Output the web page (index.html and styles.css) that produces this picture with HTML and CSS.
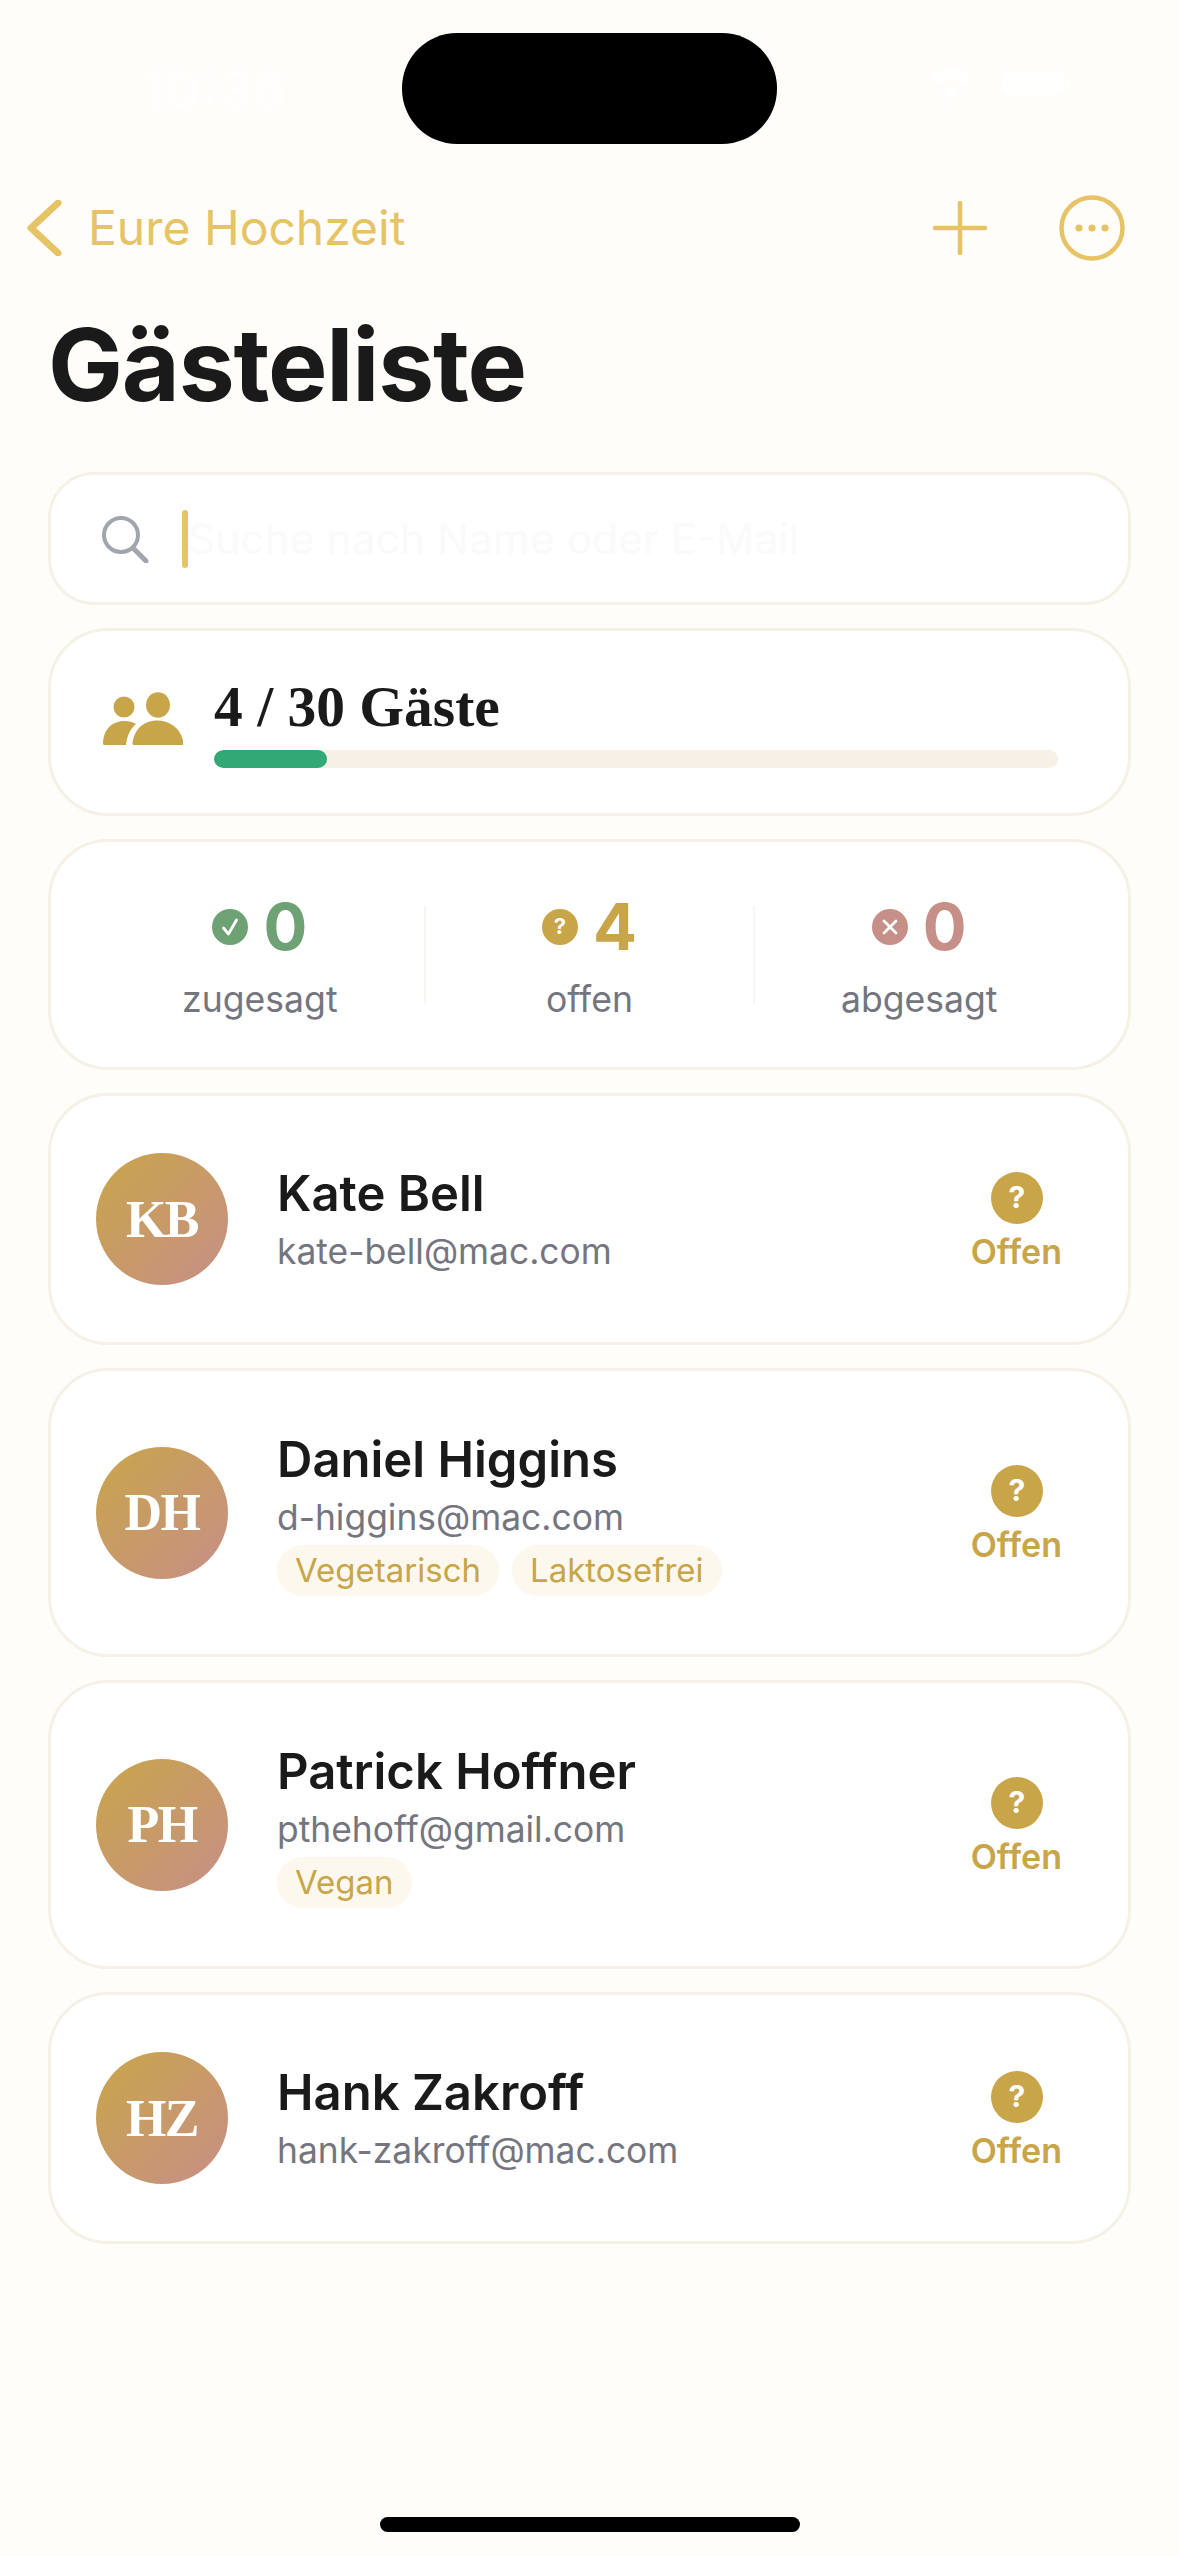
FILE: index.html
```html
<!DOCTYPE html>
<html lang="de">
<head>
<meta charset="utf-8">
<title>Gästeliste</title>
<link rel="stylesheet" href="styles.css">
</head>
<body>
<div class="island"></div>
<div class="screen">
  <div class="status">
    <span>10:36</span>
    <div class="status-icons">
      <svg class="wifi" viewBox="0 0 46 34"><path d="M23 34 15 24a12 12 0 0 1 16 0ZM9 18 3 11a30 30 0 0 1 40 0l-6 7a21 21 0 0 0-28 0Z" fill="#fffffe"/></svg>
      <svg class="battery" viewBox="0 0 68 24"><rect width="62" height="24" rx="7" fill="#fffffe"/><rect x="64" y="7" width="4" height="10" rx="2" fill="#fffffe"/></svg>
    </div>
  </div>
  <nav class="nav">
    <div class="back">
      <svg class="chev" viewBox="0 0 36 56"><path d="M32 3 5 28l27 25" fill="none" stroke="#e6c365" stroke-width="7" stroke-linecap="round" stroke-linejoin="round"/></svg>
      <span>Eure Hochzeit</span>
    </div>
    <div class="nav-actions">
      <svg class="plus" viewBox="0 0 54 54"><path d="M27 2v50M2 27h50" fill="none" stroke="#e6c365" stroke-width="4.5" stroke-linecap="round"/></svg>
      <svg class="more" viewBox="0 0 66 66"><circle cx="33" cy="33" r="30.5" fill="none" stroke="#e6c365" stroke-width="4.5"/><circle cx="20" cy="33" r="3.6" fill="#e6c365"/><circle cx="33" cy="33" r="3.6" fill="#e6c365"/><circle cx="46" cy="33" r="3.6" fill="#e6c365"/></svg>
    </div>
  </nav>
  <h1 class="title">Gästeliste</h1>

  <div class="card search">
    <svg class="lens" viewBox="0 0 48 48"><circle cx="20" cy="20" r="17" fill="none" stroke="#a3a5ae" stroke-width="4"/><path d="m32 33 13 13" stroke="#a3a5ae" stroke-width="5" stroke-linecap="round"/></svg>
    <i class="caret"></i>
    <span class="placeholder">Suche nach Name oder E-Mail</span>
  </div>

  <div class="card capacity">
    <svg class="people" viewBox="0 0 80 54"><circle cx="21" cy="15" r="10.500" fill="#c9a549"/><ellipse cx="55" cy="13" rx="12" ry="12.800" fill="#c9a549"/><path d="M0 52c0-14 9-23 21-23 5 0 9 1 12 3-6 5-9 12-10 21H1.500A1.500 1.500 0 0 1 0 52Z" fill="#c9a549"/><path d="M31 53c-.8 0-1.500-.6-1.500-1.500C31 37 41 28.500 54 28.500S79 37 80.500 51.500c0 .9-.7 1.500-1.500 1.500Z" fill="#c9a549"/></svg>
    <div class="capacity-body">
      <div class="capacity-label">4 / 30 Gäste</div>
      <div class="track"><div class="fill"></div></div>
    </div>
  </div>

  <div class="card stats">
    <div class="stat">
      <div class="stat-top green">
        <svg class="stat-ico" viewBox="0 0 36 36"><circle cx="18" cy="18" r="18" fill="#6ea274"/><path d="m11.500 19 5 6 8-14" fill="none" stroke="#fff" stroke-width="2.800" stroke-linecap="round" stroke-linejoin="round"/></svg>
        <span class="num">0</span>
      </div>
      <div class="stat-label">zugesagt</div>
    </div>
    <div class="stat">
      <div class="stat-top gold">
        <svg class="stat-ico" viewBox="0 0 36 36"><circle cx="18" cy="18" r="18" fill="#c9a549"/><text x="18" y="25" class="q-small">?</text></svg>
        <span class="num">4</span>
      </div>
      <div class="stat-label">offen</div>
    </div>
    <div class="stat">
      <div class="stat-top rose">
        <svg class="stat-ico" viewBox="0 0 36 36"><circle cx="18" cy="18" r="18" fill="#c68f87"/><path d="m12 12 12 12M24 12 12 24" fill="none" stroke="#fff" stroke-width="2.800" stroke-linecap="round"/></svg>
        <span class="num">0</span>
      </div>
      <div class="stat-label">abgesagt</div>
    </div>
  </div>

  <div class="card guest plain">
    <div class="avatar">KB</div>
    <div class="guest-body">
      <div class="guest-name">Kate Bell</div>
      <div class="guest-mail">kate-bell@mac.com</div>
    </div>
    <div class="rsvp">
      <svg class="rsvp-ico" viewBox="0 0 52 52"><circle cx="26" cy="26" r="26" fill="#c9a549"/><text x="26" y="36" class="q-big">?</text></svg>
      <span>Offen</span>
    </div>
  </div>

  <div class="card guest tagged">
    <div class="avatar">DH</div>
    <div class="guest-body">
      <div class="guest-name">Daniel Higgins</div>
      <div class="guest-mail">d-higgins@mac.com</div>
      <div class="tags"><span class="tag">Vegetarisch</span><span class="tag">Laktosefrei</span></div>
    </div>
    <div class="rsvp">
      <svg class="rsvp-ico" viewBox="0 0 52 52"><circle cx="26" cy="26" r="26" fill="#c9a549"/><text x="26" y="36" class="q-big">?</text></svg>
      <span>Offen</span>
    </div>
  </div>

  <div class="card guest tagged">
    <div class="avatar">PH</div>
    <div class="guest-body">
      <div class="guest-name">Patrick Hoffner</div>
      <div class="guest-mail">pthehoff@gmail.com</div>
      <div class="tags"><span class="tag">Vegan</span></div>
    </div>
    <div class="rsvp">
      <svg class="rsvp-ico" viewBox="0 0 52 52"><circle cx="26" cy="26" r="26" fill="#c9a549"/><text x="26" y="36" class="q-big">?</text></svg>
      <span>Offen</span>
    </div>
  </div>

  <div class="card guest plain">
    <div class="avatar">HZ</div>
    <div class="guest-body">
      <div class="guest-name">Hank Zakroff</div>
      <div class="guest-mail">hank-zakroff@mac.com</div>
    </div>
    <div class="rsvp">
      <svg class="rsvp-ico" viewBox="0 0 52 52"><circle cx="26" cy="26" r="26" fill="#c9a549"/><text x="26" y="36" class="q-big">?</text></svg>
      <span>Offen</span>
    </div>
  </div>
</div>
<div class="home-bar"></div>
</body>
</html>
```

FILE: styles.css
```css
* { box-sizing: border-box; }
html, body { margin: 0; padding: 0; }
body {
  width: 1179px;
  height: 2556px;
  overflow: hidden;
  background: #fefdf9;
  font-family: Inter, "Liberation Sans", sans-serif;
  color: #1a1a1a;
  position: relative;
}
.island {
  position: absolute;
  left: 402px;
  top: 33px;
  width: 375px;
  height: 111px;
  border-radius: 55px;
  background: #000;
}
.home-bar {
  position: absolute;
  left: 380px;
  top: 2517px;
  width: 420px;
  height: 15px;
  border-radius: 8px;
  background: #000;
}
.screen {
  display: flex;
  flex-direction: column;
  padding: 0 48px;
}
.status {
  height: 190px;
  padding: 60px 61px 0 94px;
  display: flex;
  justify-content: space-between;
  align-items: flex-start;
  font-size: 54px;
  font-weight: 600;
  line-height: 60px;
  color: #fffefc;
}
.status-icons { display: flex; align-items: center; gap: 28px; margin-top: 6px; }
.wifi { width: 46px; height: 34px; display: block; }
.battery { width: 68px; height: 24px; display: block; }
.nav {
  display: flex;
  align-items: center;
  justify-content: space-between;
  margin: 0 -22px 0 -22px;
  height: 76px;
}
.back {
  display: flex;
  align-items: center;
  gap: 26px;
  font-size: 48px;
  color: #e6c365;
  line-height: 60px;
}
.chev { width: 36px; height: 56px; display: block; }
.nav-actions { display: flex; align-items: center; gap: 72px; margin-right: 28px; }
.plus { width: 54px; height: 54px; display: block; }
.more { width: 66px; height: 66px; display: block; }
.title {
  margin: 39px 0 47px 0;
  font-size: 100px;
  line-height: 120px;
  font-weight: 700;
  letter-spacing: -1.200px;
  color: #1a1a1a;
}
.card {
  background: #fff;
  border: 3px solid #f5f1e6;
  border-radius: 60px;
  margin-bottom: 23px;
}
.search {
  height: 133px;
  border-radius: 46px;
  display: flex;
  align-items: center;
  padding-left: 50px;
}
.lens { width: 48px; height: 48px; display: block; }
.caret {
  width: 6px;
  height: 58px;
  border-radius: 3px;
  background: #e6c365;
  margin-left: 33px;
}
.placeholder {
  font-size: 42.500px;
  color: #fbfafa;
}
.capacity {
  height: 188px;
  display: flex;
  align-items: center;
  padding: 0 70px 0 52px;
  gap: 31px;
}
.people { width: 80px; height: 54px; display: block; flex: none; margin-bottom: 6px; }
.capacity-body { flex: 1; display: flex; flex-direction: column; gap: 12px; }
.capacity-label {
  font-family: "Liberation Serif", serif;
  font-weight: 700;
  font-size: 57.500px;
  line-height: 62px;
}
.track {
  height: 18px;
  border-radius: 9px;
  background: #f6f0e6;
  overflow: hidden;
}
.fill {
  width: 113px;
  height: 100%;
  border-radius: 9px;
  background: #33a877;
}
.stats {
  height: 231px;
  padding: 0 45px;
  display: flex;
  align-items: center;
}
.stat {
  flex: 1;
  height: 98px;
  display: flex;
  flex-direction: column;
  align-items: center;
}
.stat-top {
  display: flex;
  align-items: center;
  gap: 15px;
  height: 60px;
  margin-top: -9px;
}
.stat + .stat { border-left: 2px solid #f7f6f3; }
.stat-ico { width: 36px; height: 36px; display: block; }
.num {
  font-size: 65px;
  font-weight: 700;
  line-height: 60px;
}
.green .num { color: #6ea274; }
.gold .num { color: #c9a549; }
.rose .num { color: #c68f87; }
.stat-label {
  margin-top: 23px;
  font-size: 35.600px;
  line-height: 40px;
  color: #74757f;
}
.q-small, .q-big {
  font-family: Inter, sans-serif;
  font-weight: 700;
  fill: #fff;
  text-anchor: middle;
}
.q-small { font-size: 22px; }
.q-big { font-size: 30px; }
.guest {
  display: flex;
  align-items: center;
  padding: 0 66px 0 45px;
}
.plain { height: 252px; }
.tagged { height: 289px; }
.avatar {
  width: 132px;
  height: 132px;
  border-radius: 50%;
  flex: none;
  display: flex;
  align-items: center;
  justify-content: center;
  background: linear-gradient(135deg, #c9a549, #c68f87);
  color: #fff;
  font-family: "Liberation Serif", serif;
  font-weight: 700;
  font-size: 52px;
  letter-spacing: -1.500px;
}
.guest-body { flex: 1; margin-left: 49px; display: flex; flex-direction: column; }
.guest-name {
  font-size: 49px;
  line-height: 60px;
  font-weight: 600;
  color: #1a1a1a;
}
.guest-mail {
  margin-top: 6px;
  font-size: 35.400px;
  line-height: 44px;
  color: #74757f;
}
.tags { display: flex; gap: 13px; margin-top: 5px; }
.tag {
  height: 51px;
  line-height: 51px;
  padding: 0 18px;
  border-radius: 26px;
  background: #fcf8ee;
  color: #c9a549;
  font-size: 33px;
}
.rsvp {
  display: flex;
  flex-direction: column;
  align-items: center;
  gap: 8px;
  margin-top: 5px;
  color: #c9a549;
  font-size: 34px;
  line-height: 40px;
  font-weight: 600;
}
.rsvp-ico { width: 52px; height: 52px; display: block; margin-left: 2px; }
```
